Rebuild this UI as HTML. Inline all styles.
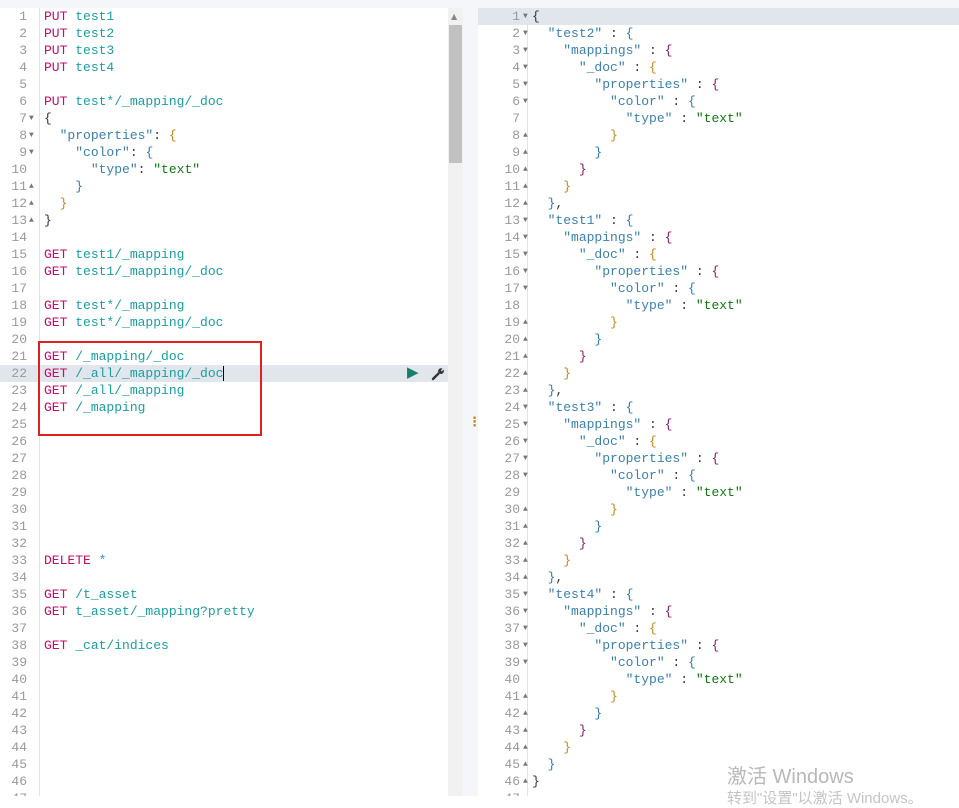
<!DOCTYPE html>
<html><head><meta charset="utf-8"><style>
body{margin:0;width:959px;height:796px;overflow:hidden;background:#fff;font-family:"Liberation Mono",monospace;font-size:13px;position:relative}
.top{position:absolute;left:0;top:0;width:959px;height:8px;background:#f5f6f9}
.pane{position:absolute;top:8px;height:788px;overflow:hidden}
.row{position:absolute;left:0;right:0;height:17px;line-height:17px;white-space:pre}
.n{position:absolute;text-align:right;color:#999;}
.f{position:absolute;color:#777;font-size:8px}
.c{position:absolute;color:#333}
.k{color:#c80a68}.u{color:#1a9ea0}.s{color:#3b80ad}.v{color:#107a10}
.b1{color:#2f7cb3}.b2{color:#8a1a6a}.b3{color:#c48a1a}
.hl{background:#e1e5ec}
</style></head><body>
<div class="top"></div>
<div class="pane" id="L" style="left:0;width:448px">
<div style="position:absolute;left:39px;top:0;width:1px;height:788px;background:#e4e4e4"></div>
<div class="row hl" style="top:357px"></div>
<div class="row" style="top:0"><span class="n" style="width:27px">1</span><span class="c" style="left:44px"><span class="k">PUT</span> <span class="u">test1</span></span></div>
<div class="row" style="top:17px"><span class="n" style="width:27px">2</span><span class="c" style="left:44px"><span class="k">PUT</span> <span class="u">test2</span></span></div>
<div class="row" style="top:34px"><span class="n" style="width:27px">3</span><span class="c" style="left:44px"><span class="k">PUT</span> <span class="u">test3</span></span></div>
<div class="row" style="top:51px"><span class="n" style="width:27px">4</span><span class="c" style="left:44px"><span class="k">PUT</span> <span class="u">test4</span></span></div>
<div class="row" style="top:68px"><span class="n" style="width:27px">5</span></div>
<div class="row" style="top:85px"><span class="n" style="width:27px">6</span><span class="c" style="left:44px"><span class="k">PUT</span> <span class="u">test*/_mapping/_doc</span></span></div>
<div class="row" style="top:102px"><span class="n" style="width:27px">7</span><span class="f" style="left:29px">▼</span><span class="c" style="left:44px">{</span></div>
<div class="row" style="top:119px"><span class="n" style="width:27px">8</span><span class="f" style="left:29px">▼</span><span class="c" style="left:44px">  <span class="s">"properties"</span>: <span class="b3">{</span></span></div>
<div class="row" style="top:136px"><span class="n" style="width:27px">9</span><span class="f" style="left:29px">▼</span><span class="c" style="left:44px">    <span class="s">"color"</span>: <span class="b1">{</span></span></div>
<div class="row" style="top:153px"><span class="n" style="width:27px">10</span><span class="c" style="left:44px">      <span class="s">"type"</span>: <span class="v">"text"</span></span></div>
<div class="row" style="top:170px"><span class="n" style="width:27px">11</span><span class="f" style="left:29px">▲</span><span class="c" style="left:44px">    <span class="b1">}</span></span></div>
<div class="row" style="top:187px"><span class="n" style="width:27px">12</span><span class="f" style="left:29px">▲</span><span class="c" style="left:44px">  <span class="b3">}</span></span></div>
<div class="row" style="top:204px"><span class="n" style="width:27px">13</span><span class="f" style="left:29px">▲</span><span class="c" style="left:44px">}</span></div>
<div class="row" style="top:221px"><span class="n" style="width:27px">14</span></div>
<div class="row" style="top:238px"><span class="n" style="width:27px">15</span><span class="c" style="left:44px"><span class="k">GET</span> <span class="u">test1/_mapping</span></span></div>
<div class="row" style="top:255px"><span class="n" style="width:27px">16</span><span class="c" style="left:44px"><span class="k">GET</span> <span class="u">test1/_mapping/_doc</span></span></div>
<div class="row" style="top:272px"><span class="n" style="width:27px">17</span></div>
<div class="row" style="top:289px"><span class="n" style="width:27px">18</span><span class="c" style="left:44px"><span class="k">GET</span> <span class="u">test*/_mapping</span></span></div>
<div class="row" style="top:306px"><span class="n" style="width:27px">19</span><span class="c" style="left:44px"><span class="k">GET</span> <span class="u">test*/_mapping/_doc</span></span></div>
<div class="row" style="top:323px"><span class="n" style="width:27px">20</span></div>
<div class="row" style="top:340px"><span class="n" style="width:27px">21</span><span class="c" style="left:44px"><span class="k">GET</span> <span class="u">/_mapping/_doc</span></span></div>
<div class="row" style="top:357px"><span class="n" style="width:27px">22</span><span class="c" style="left:44px"><span class="k">GET</span> <span class="u">/_all/_mapping/_doc</span><span style="border-left:1px solid #000"> </span></span><span style="position:absolute;left:407px;top:0;color:#17806d;font-size:15px">▶</span><svg style="position:absolute;left:431px;top:2px" width="14" height="14" viewBox="0 0 14 14"><path d="M2 12 L7.5 6.5" stroke="#333" stroke-width="2.4" stroke-linecap="round"/><path d="M7 4.5 A3.2 3.2 0 0 1 11.5 1.5 L9.8 3.6 L10.6 4.4 L12.7 2.7 A3.2 3.2 0 0 1 9.5 7 Z" fill="#333"/></svg></div>
<div class="row" style="top:374px"><span class="n" style="width:27px">23</span><span class="c" style="left:44px"><span class="k">GET</span> <span class="u">/_all/_mapping</span></span></div>
<div class="row" style="top:391px"><span class="n" style="width:27px">24</span><span class="c" style="left:44px"><span class="k">GET</span> <span class="u">/_mapping</span></span></div>
<div class="row" style="top:408px"><span class="n" style="width:27px">25</span></div>
<div class="row" style="top:425px"><span class="n" style="width:27px">26</span></div>
<div class="row" style="top:442px"><span class="n" style="width:27px">27</span></div>
<div class="row" style="top:459px"><span class="n" style="width:27px">28</span></div>
<div class="row" style="top:476px"><span class="n" style="width:27px">29</span></div>
<div class="row" style="top:493px"><span class="n" style="width:27px">30</span></div>
<div class="row" style="top:510px"><span class="n" style="width:27px">31</span></div>
<div class="row" style="top:527px"><span class="n" style="width:27px">32</span></div>
<div class="row" style="top:544px"><span class="n" style="width:27px">33</span><span class="c" style="left:44px"><span class="k">DELETE</span> <span class="u">*</span></span></div>
<div class="row" style="top:561px"><span class="n" style="width:27px">34</span></div>
<div class="row" style="top:578px"><span class="n" style="width:27px">35</span><span class="c" style="left:44px"><span class="k">GET</span> <span class="u">/t_asset</span></span></div>
<div class="row" style="top:595px"><span class="n" style="width:27px">36</span><span class="c" style="left:44px"><span class="k">GET</span> <span class="u">t_asset/_mapping?pretty</span></span></div>
<div class="row" style="top:612px"><span class="n" style="width:27px">37</span></div>
<div class="row" style="top:629px"><span class="n" style="width:27px">38</span><span class="c" style="left:44px"><span class="k">GET</span> <span class="u">_cat/indices</span></span></div>
<div class="row" style="top:646px"><span class="n" style="width:27px">39</span></div>
<div class="row" style="top:663px"><span class="n" style="width:27px">40</span></div>
<div class="row" style="top:680px"><span class="n" style="width:27px">41</span></div>
<div class="row" style="top:697px"><span class="n" style="width:27px">42</span></div>
<div class="row" style="top:714px"><span class="n" style="width:27px">43</span></div>
<div class="row" style="top:731px"><span class="n" style="width:27px">44</span></div>
<div class="row" style="top:748px"><span class="n" style="width:27px">45</span></div>
<div class="row" style="top:765px"><span class="n" style="width:27px">46</span></div>
<div class="row" style="top:782px"><span class="n" style="width:27px">47</span></div>
</div>
<div style="position:absolute;left:38px;top:341px;width:220px;height:91px;border:2px solid #e0201c"></div>
<div style="position:absolute;left:448px;top:8px;width:15px;height:788px;background:#f1f1f1"></div>
<div style="position:absolute;left:449px;top:25px;width:13px;height:138px;background:#c1c1c1"></div>
<div style="position:absolute;left:451px;top:12px;color:#888;font-size:8px;font-family:'DejaVu Sans'">▲</div>
<div style="position:absolute;left:463px;top:8px;width:15px;height:788px;background:#f5f6f9"></div>
<div style="position:absolute;left:468px;top:415px;color:#c48a1a;font-size:13px;font-weight:bold;font-family:'DejaVu Sans'">⋮</div>
<div class="pane" style="left:478px;width:481px">
<div style="position:absolute;left:49px;top:0;width:1px;height:788px;background:#e4e4e4"></div>
<div class="row hl" style="top:0"></div>
<div class="row" style="top:0"><span class="n" style="width:42px">1</span><span class="f" style="left:45px">▼</span><span class="c" style="left:54px">{</span></div>
<div class="row" style="top:17px"><span class="n" style="width:42px">2</span><span class="f" style="left:45px">▼</span><span class="c" style="left:54px">  <span class="s">"test2"</span> : <span class="b1">{</span></span></div>
<div class="row" style="top:34px"><span class="n" style="width:42px">3</span><span class="f" style="left:45px">▼</span><span class="c" style="left:54px">    <span class="s">"mappings"</span> : <span class="b2">{</span></span></div>
<div class="row" style="top:51px"><span class="n" style="width:42px">4</span><span class="f" style="left:45px">▼</span><span class="c" style="left:54px">      <span class="s">"_doc"</span> : <span class="b3">{</span></span></div>
<div class="row" style="top:68px"><span class="n" style="width:42px">5</span><span class="f" style="left:45px">▼</span><span class="c" style="left:54px">        <span class="s">"properties"</span> : <span class="b2">{</span></span></div>
<div class="row" style="top:85px"><span class="n" style="width:42px">6</span><span class="f" style="left:45px">▼</span><span class="c" style="left:54px">          <span class="s">"color"</span> : <span class="b1">{</span></span></div>
<div class="row" style="top:102px"><span class="n" style="width:42px">7</span><span class="c" style="left:54px">            <span class="s">"type"</span> : <span class="v">"text"</span></span></div>
<div class="row" style="top:119px"><span class="n" style="width:42px">8</span><span class="f" style="left:45px">▲</span><span class="c" style="left:54px">          <span class="b3">}</span></span></div>
<div class="row" style="top:136px"><span class="n" style="width:42px">9</span><span class="f" style="left:45px">▲</span><span class="c" style="left:54px">        <span class="b1">}</span></span></div>
<div class="row" style="top:153px"><span class="n" style="width:42px">10</span><span class="f" style="left:45px">▲</span><span class="c" style="left:54px">      <span class="b2">}</span></span></div>
<div class="row" style="top:170px"><span class="n" style="width:42px">11</span><span class="f" style="left:45px">▲</span><span class="c" style="left:54px">    <span class="b3">}</span></span></div>
<div class="row" style="top:187px"><span class="n" style="width:42px">12</span><span class="f" style="left:45px">▲</span><span class="c" style="left:54px">  <span class="b1">}</span>,</span></div>
<div class="row" style="top:204px"><span class="n" style="width:42px">13</span><span class="f" style="left:45px">▼</span><span class="c" style="left:54px">  <span class="s">"test1"</span> : <span class="b1">{</span></span></div>
<div class="row" style="top:221px"><span class="n" style="width:42px">14</span><span class="f" style="left:45px">▼</span><span class="c" style="left:54px">    <span class="s">"mappings"</span> : <span class="b2">{</span></span></div>
<div class="row" style="top:238px"><span class="n" style="width:42px">15</span><span class="f" style="left:45px">▼</span><span class="c" style="left:54px">      <span class="s">"_doc"</span> : <span class="b3">{</span></span></div>
<div class="row" style="top:255px"><span class="n" style="width:42px">16</span><span class="f" style="left:45px">▼</span><span class="c" style="left:54px">        <span class="s">"properties"</span> : <span class="b2">{</span></span></div>
<div class="row" style="top:272px"><span class="n" style="width:42px">17</span><span class="f" style="left:45px">▼</span><span class="c" style="left:54px">          <span class="s">"color"</span> : <span class="b1">{</span></span></div>
<div class="row" style="top:289px"><span class="n" style="width:42px">18</span><span class="c" style="left:54px">            <span class="s">"type"</span> : <span class="v">"text"</span></span></div>
<div class="row" style="top:306px"><span class="n" style="width:42px">19</span><span class="f" style="left:45px">▲</span><span class="c" style="left:54px">          <span class="b3">}</span></span></div>
<div class="row" style="top:323px"><span class="n" style="width:42px">20</span><span class="f" style="left:45px">▲</span><span class="c" style="left:54px">        <span class="b1">}</span></span></div>
<div class="row" style="top:340px"><span class="n" style="width:42px">21</span><span class="f" style="left:45px">▲</span><span class="c" style="left:54px">      <span class="b2">}</span></span></div>
<div class="row" style="top:357px"><span class="n" style="width:42px">22</span><span class="f" style="left:45px">▲</span><span class="c" style="left:54px">    <span class="b3">}</span></span></div>
<div class="row" style="top:374px"><span class="n" style="width:42px">23</span><span class="f" style="left:45px">▲</span><span class="c" style="left:54px">  <span class="b1">}</span>,</span></div>
<div class="row" style="top:391px"><span class="n" style="width:42px">24</span><span class="f" style="left:45px">▼</span><span class="c" style="left:54px">  <span class="s">"test3"</span> : <span class="b1">{</span></span></div>
<div class="row" style="top:408px"><span class="n" style="width:42px">25</span><span class="f" style="left:45px">▼</span><span class="c" style="left:54px">    <span class="s">"mappings"</span> : <span class="b2">{</span></span></div>
<div class="row" style="top:425px"><span class="n" style="width:42px">26</span><span class="f" style="left:45px">▼</span><span class="c" style="left:54px">      <span class="s">"_doc"</span> : <span class="b3">{</span></span></div>
<div class="row" style="top:442px"><span class="n" style="width:42px">27</span><span class="f" style="left:45px">▼</span><span class="c" style="left:54px">        <span class="s">"properties"</span> : <span class="b2">{</span></span></div>
<div class="row" style="top:459px"><span class="n" style="width:42px">28</span><span class="f" style="left:45px">▼</span><span class="c" style="left:54px">          <span class="s">"color"</span> : <span class="b1">{</span></span></div>
<div class="row" style="top:476px"><span class="n" style="width:42px">29</span><span class="c" style="left:54px">            <span class="s">"type"</span> : <span class="v">"text"</span></span></div>
<div class="row" style="top:493px"><span class="n" style="width:42px">30</span><span class="f" style="left:45px">▲</span><span class="c" style="left:54px">          <span class="b3">}</span></span></div>
<div class="row" style="top:510px"><span class="n" style="width:42px">31</span><span class="f" style="left:45px">▲</span><span class="c" style="left:54px">        <span class="b1">}</span></span></div>
<div class="row" style="top:527px"><span class="n" style="width:42px">32</span><span class="f" style="left:45px">▲</span><span class="c" style="left:54px">      <span class="b2">}</span></span></div>
<div class="row" style="top:544px"><span class="n" style="width:42px">33</span><span class="f" style="left:45px">▲</span><span class="c" style="left:54px">    <span class="b3">}</span></span></div>
<div class="row" style="top:561px"><span class="n" style="width:42px">34</span><span class="f" style="left:45px">▲</span><span class="c" style="left:54px">  <span class="b1">}</span>,</span></div>
<div class="row" style="top:578px"><span class="n" style="width:42px">35</span><span class="f" style="left:45px">▼</span><span class="c" style="left:54px">  <span class="s">"test4"</span> : <span class="b1">{</span></span></div>
<div class="row" style="top:595px"><span class="n" style="width:42px">36</span><span class="f" style="left:45px">▼</span><span class="c" style="left:54px">    <span class="s">"mappings"</span> : <span class="b2">{</span></span></div>
<div class="row" style="top:612px"><span class="n" style="width:42px">37</span><span class="f" style="left:45px">▼</span><span class="c" style="left:54px">      <span class="s">"_doc"</span> : <span class="b3">{</span></span></div>
<div class="row" style="top:629px"><span class="n" style="width:42px">38</span><span class="f" style="left:45px">▼</span><span class="c" style="left:54px">        <span class="s">"properties"</span> : <span class="b2">{</span></span></div>
<div class="row" style="top:646px"><span class="n" style="width:42px">39</span><span class="f" style="left:45px">▼</span><span class="c" style="left:54px">          <span class="s">"color"</span> : <span class="b1">{</span></span></div>
<div class="row" style="top:663px"><span class="n" style="width:42px">40</span><span class="c" style="left:54px">            <span class="s">"type"</span> : <span class="v">"text"</span></span></div>
<div class="row" style="top:680px"><span class="n" style="width:42px">41</span><span class="f" style="left:45px">▲</span><span class="c" style="left:54px">          <span class="b3">}</span></span></div>
<div class="row" style="top:697px"><span class="n" style="width:42px">42</span><span class="f" style="left:45px">▲</span><span class="c" style="left:54px">        <span class="b1">}</span></span></div>
<div class="row" style="top:714px"><span class="n" style="width:42px">43</span><span class="f" style="left:45px">▲</span><span class="c" style="left:54px">      <span class="b2">}</span></span></div>
<div class="row" style="top:731px"><span class="n" style="width:42px">44</span><span class="f" style="left:45px">▲</span><span class="c" style="left:54px">    <span class="b3">}</span></span></div>
<div class="row" style="top:748px"><span class="n" style="width:42px">45</span><span class="f" style="left:45px">▲</span><span class="c" style="left:54px">  <span class="b1">}</span></span></div>
<div class="row" style="top:765px"><span class="n" style="width:42px">46</span><span class="f" style="left:45px">▲</span><span class="c" style="left:54px">}</span></div>
<div class="row" style="top:782px"><span class="n" style="width:42px">47</span></div>
</div>
<div style="position:absolute;left:727px;top:760px;color:#b8b8b8;font-family:'Liberation Sans','Noto Sans CJK SC',sans-serif;font-size:20px;white-space:nowrap">激活 Windows</div>
<div style="position:absolute;left:727px;top:787px;color:#c4c4c4;font-family:'Liberation Sans','Noto Sans CJK SC',sans-serif;font-size:15px;white-space:nowrap">转到"设置"以激活 Windows。</div>
</body></html>
